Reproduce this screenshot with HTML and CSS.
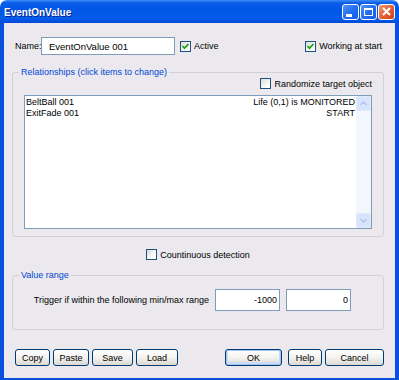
FILE: index.html
```html
<!DOCTYPE html>
<html lang="en">
<head>
  <meta charset="UTF-8" />
  <title>EventOnValue</title>
  <link rel="stylesheet" href="styles.css">
</head>
<body>
  <div class="window">
    <div class="titlebar">
      <span class="title">EventOnValue</span>
      <div class="caption-buttons">
        <span class="cap-btn">
          <svg width="15" height="14" viewBox="0 0 15 14"><rect x="3" y="9" width="6" height="3" fill="#fff"/></svg>
        </span>
        <span class="cap-btn">
          <svg width="15" height="14" viewBox="0 0 15 14"><rect x="3.5" y="3.5" width="8" height="7" fill="none" stroke="#fff"/><rect x="3" y="3" width="9" height="2" fill="#fff"/></svg>
        </span>
        <span class="cap-btn close">
          <svg width="15" height="14" viewBox="0 0 15 14"><path d="M4 3 L11 10 M11 3 L4 10" stroke="#fff" stroke-width="2"/></svg>
        </span>
      </div>
    </div>

    <div class="frame">
      <div class="name-row">
        <span class="name-label">Name:</span>
        <input class="textbox name-box" type="text" value="EventOnValue 001">
        <span class="check-item active-check">
          <span class="check"><svg width="9" height="9" viewBox="0 0 9 9"><polyline points="1.5,4 3.5,6.2 7.5,2" fill="none" stroke="#21a121" stroke-width="1.8"/></svg></span>
          Active
        </span>
        <span class="check-item working-check">
          <span class="check"><svg width="9" height="9" viewBox="0 0 9 9"><polyline points="1.5,4 3.5,6.2 7.5,2" fill="none" stroke="#21a121" stroke-width="1.8"/></svg></span>
          Working at start
        </span>
      </div>

      <fieldset class="group relations">
        <legend>Relationships (click items to change)</legend>
        <div class="randomize-row">
          <span class="check-item"><span class="check"></span>Randomize target object</span>
        </div>
        <div class="listbox">
          <div class="list-items">
            <div class="list-item"><span>BeltBall 001</span><span>Life (0,1) is MONITORED</span></div>
            <div class="list-item"><span>ExitFade 001</span><span>START</span></div>
          </div>
          <div class="scrollbar">
            <span class="scroll-btn">
              <svg width="7" height="5" viewBox="0 0 7 5"><polyline points="0.5,4 3.5,1 6.5,4" fill="none" stroke="#b0c4ef" stroke-width="1.5"/></svg>
            </span>
            <span class="scroll-track"></span>
            <span class="scroll-btn">
              <svg width="7" height="5" viewBox="0 0 7 5"><polyline points="0.5,1 3.5,4 6.5,1" fill="none" stroke="#b0c4ef" stroke-width="1.5"/></svg>
            </span>
          </div>
        </div>
      </fieldset>

      <div class="continuous-row">
        <span class="check-item"><span class="check"></span>Countinuous detection</span>
      </div>

      <fieldset class="group value-range">
        <legend>Value range</legend>
        <div class="range-row">
          <span class="range-label">Trigger if within the following min/max range</span>
          <input class="textbox range-box" type="text" value="-1000">
          <input class="textbox range-box" type="text" value="0">
        </div>
      </fieldset>

      <div class="button-row">
        <button class="btn" style="width:35px">Copy</button>
        <button class="btn" style="width:36px">Paste</button>
        <button class="btn" style="width:41px">Save</button>
        <button class="btn" style="width:42px">Load</button>
        <span class="spacer"></span>
        <button class="btn default" style="width:57px">OK</button>
        <button class="btn help" style="width:34px">Help</button>
        <button class="btn" style="width:59px">Cancel</button>
      </div>
    </div>
  </div>
</body>
</html>
```

FILE: styles.css
```css
body {
  margin: 0;
  background: #fff;
  font-family: "Liberation Sans", Arial, sans-serif;
  font-size: 9px;
  color: #000;
}
.window {
  width: 399px;
  height: 380px;
  display: flex;
  flex-direction: column;
  border-radius: 7px 7px 0 0;
  overflow: hidden;
}
.titlebar {
  height: 23px;
  flex: none;
  display: flex;
  align-items: center;
  padding: 0 4px;
  background: linear-gradient(#3d8ff7 0, #0a5de9 3px, #0056e4 10px, #065ded 18px, #0049d6 23px);
}
.title {
  color: #fff;
  font-weight: bold;
  font-size: 10px;
  padding-top: 2px;
  text-shadow: 1px 1px 0 #0a2390;
}
.caption-buttons {
  margin-left: auto;
  display: flex;
  gap: 1px;
}
.cap-btn {
  width: 17px;
  height: 16px;
  box-sizing: border-box;
  border: 1px solid #fff;
  border-radius: 3px;
  background: linear-gradient(135deg, #4d93fb, #1e67ef 60%, #1a5fe6);
  display: flex;
  align-items: center;
  justify-content: center;
}
.cap-btn.close {
  background: linear-gradient(135deg, #f09a74, #e2582f 60%, #c9421c);
}
.frame {
  flex: 1;
  display: flex;
  flex-direction: column;
  background: #ebe9ed;
  border: 4px solid #0b50dd;
  border-top: none;
  padding: 14px 11px 12px 8px;
}
.name-row {
  height: 18px;
  display: flex;
  align-items: center;
  padding-left: 3px;
}
.name-label {
  width: 26px;
}
.textbox {
  box-sizing: border-box;
  border: 1px solid #7f9db9;
  background: #fff;
  font: inherit;
  margin: 0;
  outline: none;
}
.name-box {
  width: 134px;
  height: 18px;
  padding: 0 0 0 7px;
  font-size: 9.5px;
}
.check-item {
  display: flex;
  align-items: center;
  gap: 3px;
}
.check {
  width: 11px;
  height: 11px;
  box-sizing: border-box;
  border: 1px solid #1c5180;
  background: linear-gradient(135deg, #dcdcd7, #fff 80%);
  display: flex;
  align-items: center;
  justify-content: center;
}
.active-check {
  margin-left: 5px;
}
.working-check {
  margin-left: auto;
  margin-right: 2px;
}
.group {
  margin: 0;
  padding: 0;
  min-width: 0;
  border: 1px solid #d2d0d4;
  border-radius: 3px;
}
.group legend {
  margin-left: 6px;
  padding: 0 2px;
  line-height: 11px;
  color: #0046d5;
}
.relations {
  margin-top: 12px;
  padding-bottom: 7px;
}
.randomize-row {
  height: 11px;
  display: flex;
  justify-content: flex-end;
  padding-right: 11px;
}
.listbox {
  height: 132px;
  margin: 6px 11px 0;
  border: 1px solid #7f9db9;
  background: #fff;
  display: flex;
}
.list-items {
  flex: 1;
  padding: 1px 1px 0 1px;
}
.list-item {
  display: flex;
  justify-content: space-between;
  line-height: 11px;
}
.scrollbar {
  width: 15px;
  display: flex;
  flex-direction: column;
  background: #f3f6fd;
}
.scroll-btn {
  height: 15px;
  box-sizing: border-box;
  border: 1px solid #e1e9fb;
  border-radius: 2px;
  background: #d9e4fc;
  display: flex;
  align-items: center;
  justify-content: center;
}
.scroll-track {
  flex: 1;
}
.continuous-row {
  height: 11px;
  margin-top: 12px;
  display: flex;
  justify-content: center;
}
.value-range {
  margin-top: 10px;
  height: 60px;
  box-sizing: border-box;
}
.range-row {
  margin-top: 8px;
  display: flex;
  align-items: center;
  justify-content: flex-end;
  gap: 6px;
  padding-right: 32px;
}
.range-box {
  width: 65px;
  height: 22px;
  padding: 0 2px 0 0;
  text-align: right;
}
.button-row {
  margin-top: 19px;
  height: 17px;
  display: flex;
  gap: 3px;
  padding-left: 3px;
}
.spacer {
  flex: 1;
}
.btn {
  height: 17px;
  padding: 0;
  border: 1px solid #003c74;
  border-radius: 3px;
  background: linear-gradient(#ffffff, #f4f3ef 50%, #dcd8d2);
  font: inherit;
  color: #000;
}
.btn.default {
  box-shadow: inset 0 0 0 1px #a8c4f0, inset 0 -1px 0 2px #cddcf6;
}
.btn.help {
  margin-left: 3px;
}
```
